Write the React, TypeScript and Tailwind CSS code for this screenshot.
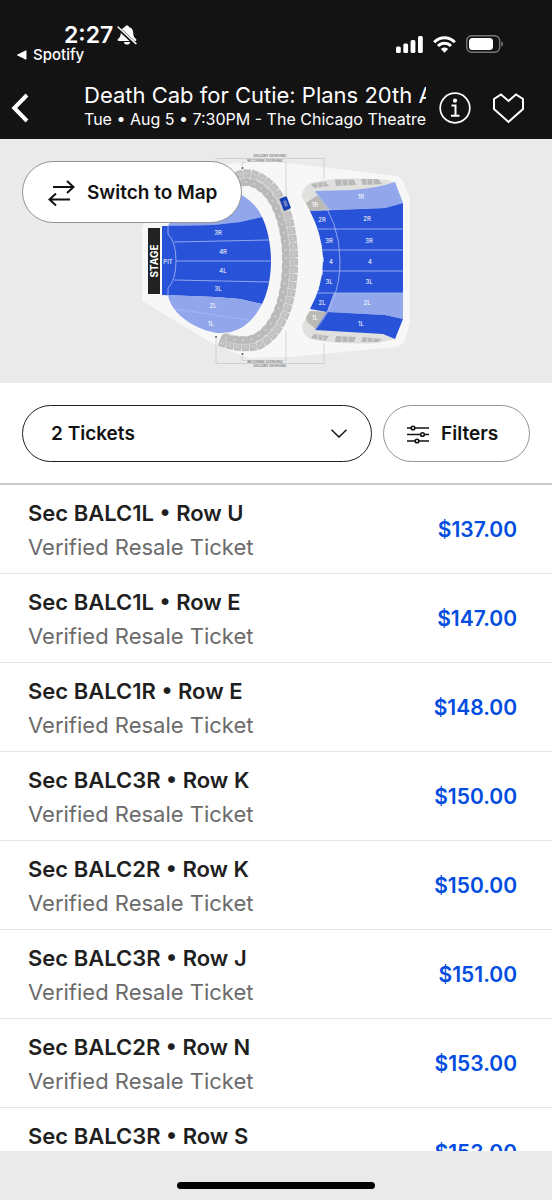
import { useState } from "react";

type Listing = {
  section: string;
  row: string;
  price: string;
};

const LISTINGS: Listing[] = [
  { section: "BALC1L", row: "U", price: "$137.00" },
  { section: "BALC1L", row: "E", price: "$147.00" },
  { section: "BALC1R", row: "E", price: "$148.00" },
  { section: "BALC3R", row: "K", price: "$150.00" },
  { section: "BALC2R", row: "K", price: "$150.00" },
  { section: "BALC3R", row: "J", price: "$151.00" },
  { section: "BALC2R", row: "N", price: "$153.00" },
  { section: "BALC3R", row: "S", price: "$153.00" },
];

const MAP_LABELS = [
  { x: 218, y: 235, text: "3R" },
  { x: 223, y: 254, text: "4R" },
  { x: 223, y: 273, text: "4L" },
  { x: 218, y: 291, text: "3L" },
  { x: 213, y: 308, text: "2L" },
  { x: 211, y: 326, text: "1L" },
  { x: 168, y: 264, text: "PIT" },
  { x: 361, y: 199, text: "1R" },
  { x: 367, y: 221, text: "2R" },
  { x: 369, y: 243, text: "3R" },
  { x: 370, y: 264, text: "4" },
  { x: 369, y: 284, text: "3L" },
  { x: 367, y: 305, text: "2L" },
  { x: 361, y: 326, text: "1L" },
  { x: 315, y: 207, text: "1R" },
  { x: 322, y: 222, text: "2R" },
  { x: 329, y: 243, text: "3R" },
  { x: 331, y: 264, text: "4" },
  { x: 329, y: 284, text: "3L" },
  { x: 322, y: 305, text: "2L" },
  { x: 315, y: 320, text: "1L" },
];

function StatusBar() {
  return (
    <div className="flex h-[68px] items-start justify-between pl-4 pr-12 pt-[23px]">
      <div>
        <div className="flex items-center gap-1 pl-12">
          <span className="text-[23px] font-semibold leading-6">2:27</span>
          <svg className="h-5 w-5" viewBox="0 0 20 20" aria-label="Silent mode">
            <path
              d="M10 .5C8.800 .5 8.200 1.100 8 1.900C5 2.800 3.800 5.200 3.800 8C3.800 11.200 2.600 12.500 1 14C.3 14.700 .6 16 1.800 16H18.200C19.400 16 19.700 14.700 19 14C17.400 12.500 16.200 11.200 16.200 8C16.200 5.200 15 2.800 12 1.900C11.800 1.100 11.200 .5 10 .5ZM6.800 17C7.200 18.700 8.400 19.600 10 19.600C11.600 19.600 12.800 18.700 13.200 17Z"
              fill="#fff"
            />
            <path d="M.5 2.500L19 19.500" stroke="#131313" strokeWidth="3.600" />
            <path d="M1 2L19 18.600" stroke="#fff" strokeWidth="1.500" strokeLinecap="round" />
          </svg>
        </div>
        <a href="#spotify" className="flex items-center gap-[6px] text-[15px] font-medium leading-4">
          <svg className="h-[10px] w-[11px]" viewBox="0 0 11 10" aria-hidden="true">
            <path d="M1.500 5L10 .8V9.200Z" fill="#fff" stroke="#fff" strokeLinejoin="round" />
          </svg>
          Spotify
        </a>
      </div>
      <div className="flex items-center gap-[10px] pt-3">
        <svg className="h-[17px] w-[27px]" viewBox="0 0 27 17" fill="#fff" aria-label="Signal">
          <rect x="0" y="10.500" width="4.800" height="6.500" rx="1.500" />
          <rect x="7.300" y="7.500" width="4.800" height="9.500" rx="1.500" />
          <rect x="14.600" y="4" width="4.800" height="13" rx="1.500" />
          <rect x="22" y="0" width="4.800" height="17" rx="1.500" />
        </svg>
        <svg className="h-[17px] w-[23px]" viewBox="0 0 23 17" fill="none" stroke="#fff" strokeWidth="3" aria-label="Wi-Fi">
          <path d="M1.200 6.200C7 .1 16 .1 21.800 6.200" />
          <path d="M5 10C8.800 6.200 14.200 6.200 18 10" />
          <path d="M7.900 12.900C10 10.900 13 10.900 15.100 12.900L11.500 16.700Z" fill="#fff" stroke="none" />
        </svg>
        <svg className="h-[18px] w-[38px]" viewBox="0 0 38 18" aria-label="Battery">
          <rect x=".7" y=".7" width="33" height="16.600" rx="5" fill="none" stroke="#77777a" strokeWidth="1.400" />
          <rect x="3" y="3" width="24" height="12" rx="3.500" fill="#fff" />
          <path d="M35.300 6.300C37.600 7.300 37.600 10.700 35.300 11.700Z" fill="#77777a" />
        </svg>
      </div>
    </div>
  );
}

function EventHeader() {
  return (
    <div className="flex h-[71px] items-start pl-[11px] pr-7">
      <button type="button" aria-label="Back" className="mt-[25px] w-[73px] shrink-0">
        <svg className="h-[30px] w-[18px]" viewBox="0 0 18 30" fill="none" stroke="#fff" strokeWidth="4">
          <path d="M16 2L3.300 15L16 28" />
        </svg>
      </button>
      <div className="min-w-0 flex-1 overflow-hidden whitespace-nowrap pt-[13px]">
        <h1 className="text-[22px] font-normal leading-7">Death Cab for Cutie: Plans 20th Anniversary Tour</h1>
        <p className="text-[16px] leading-5">Tue • Aug 5 • 7:30PM - The Chicago Theatre</p>
      </div>
      <button type="button" aria-label="Event info" className="ml-[13px] mt-6 shrink-0">
        <svg className="h-8 w-8" viewBox="0 0 32 32" fill="none" stroke="#fff">
          <circle cx="16" cy="16" r="14.800" strokeWidth="1.700" />
          <circle cx="16" cy="8.700" r="2.100" fill="#fff" stroke="none" />
          <path d="M12.500 13.500H16.500V23.500M12 23.700H20.500" strokeWidth="2" />
        </svg>
      </button>
      <button type="button" aria-label="Favorite" className="ml-[21px] mt-6 shrink-0">
        <svg className="h-8 w-8" viewBox="0 0 32 32" fill="none" stroke="#fff" strokeWidth="2">
          <path d="M9 2.500L16.500 9L24 2.500L31 7V17L16.500 30L2 17V7Z" />
        </svg>
      </button>
    </div>
  );
}

function SeatMap() {
  return (
    <svg className="block w-full" viewBox="0 139 552 244" role="img" aria-label="Seating chart">
      <path d="M142 226L216 166L252 160L287 163L397 176Q402 177 404 184L410 198V322L405 340Q402 346 396 347L290 357L248 358L215 345L142 301Z" fill="#f7f7f7" />
      <rect x="148" y="228" width="12" height="66" fill="#222" />

      {/* orchestra */}
      <path d="M168 226C185 197 207 187 218 188C238 189 255 201 262 217L240 222L213 225Z" fill="#91a6eb" />
      <path d="M162 226L213 225L240 222L262 217C274 242 274 280 262 304L240 299L215 297L162 295Z" fill="#2853d9" />
      <path d="M168 295L215 297L240 299L262 304C250 328 233 334 218 333C198 331 171 315 168 295Z" fill="#91a6eb" />
      <g fill="none" stroke="#a9bbf3" strokeWidth=".8">
        <path d="M168 226V234Q176 242 176 261T168 288V296" />
        <path d="M174 242L269 240M176 261H271M174 280L269 282M175 309L248 320" />
      </g>

      {/* mezzanine ring */}
      <g fill="none">
        <path d="M222 338Q240 345 255 342C278 333 289 300 289 261C289 222 278 189 255 180Q245 176 234 182" stroke="#dadada" strokeWidth="13" />
        <path d="M219 342Q241 350 258 346C283 335 294 300 294 261C294 222 283 187 258 176Q245 170 234 177" stroke="#bfbfbf" strokeWidth="8" strokeDasharray="7 .8" />
        <path d="M225 338Q239 342 252 339C274 331 286 300 286 261C286 222 274 191 252 183Q244 180 234 186" stroke="#b9b9b9" strokeWidth="8" strokeDasharray="2.500 6" strokeLinecap="round" />
        <path d="M222 340Q240 347 256 343C280 334 290 300 290 261C290 222 280 188 256 179" stroke="#d6d6d6" strokeWidth=".8" />
        <path d="M219 342Q241 350 258 346C283 335 294 300 294 261C294 222 283 187 258 176Q245 170 234 177" stroke="#d2d2d2" strokeWidth="2.500" strokeDasharray="1 1 1 4.800" strokeDashoffset="-2" />
        <path d="M225 338Q239 342 252 339C274 331 286 300 286 261C286 222 274 191 252 183Q244 180 234 186" stroke="#d0d0d0" strokeWidth="2" strokeDasharray="2 6.500" />
      </g>
      <path d="M279.500 199L286.500 196L291 208L284 211Z" fill="#173fb5" />
      <path d="M283 201L286 200L288 206L285 207Z" fill="#6b80c9" />

      {/* balcony */}
      <path d="M302 197Q302 188 310 183Q340 176 388 180L396 183L390 192L340 215L310 211ZM302 325Q302 334 310 339Q340 345 378 343L396 339L390 325L340 308L310 311Z" fill="#e0e0de" />
      <path d="M306 203L318 195L330 209L310 211ZM306 317L310 311L328 312L316 329L307 322Z" fill="#bbb9b5" />
      <path d="M311 184L325 181.500L329 186L314 188ZM335 179.500H354L356 185L336 186ZM361 179H378L382 184L363 185ZM311 338L325 341L329 336L314 334ZM335 342H354L356 337L336 336ZM361 342H378L382 339L363 337Z" fill="#b7b7b7" />
      <path d="M318 181V188M323 181V188M342 179V187M348 179V187M367 179V187M373 179V187M318 333V341M323 333V341M342 335V343M348 335V343M367 335V343M373 335V343" stroke="#e0e0de" />
      <path d="M315 191L352 190Q378 188 395 182L403 203L385 208L330 210Z" fill="#91a6eb" />
      <path d="M310 211L385 208L403 203V293H334L327 312L310 309Q323 285 323 261T310 211Z" fill="#2853d9" />
      <path d="M334 293H403V319L385 315L327 312Z" fill="#91a6eb" />
      <path d="M327 312L385 315L403 319L395 339L383 334L315 330Z" fill="#2853d9" />
      <g fill="none" stroke="#a9bbf3" strokeWidth=".8">
        <path d="M315 191Q340 221 340 261T315 330" />
        <path d="M317 229H403M322 250H403M322 271H403M317 293H403" />
      </g>
      <path d="M316 226V231M321 245V250M323 257V262M322 270V275M318 286V291" stroke="#f7f7f7" strokeWidth="1" />

      {/* overhang outlines */}
      <g fill="none" stroke="#c4c4c4" strokeWidth=".7">
        <path d="M216 178V158.500H324V179M242 166V162.500H246M284 162.500H286V197" />
        <path d="M216 339V363.500H324V343M242 356V360.500H246M284 360.500H286V331" />
      </g>
      <g fill="#555">
        <circle cx="216" cy="337" r="1" />
        <circle cx="242.500" cy="354" r="1" />
        <circle cx="242.500" cy="168" r="1" />
      </g>
      <g fill="#777" fontSize="3" fontWeight="600" textAnchor="middle">
        <text x="270" y="157">BALCONY OVERHANG</text>
        <text x="265" y="162">MEZZANINE OVERHANG</text>
        <text x="265" y="363">MEZZANINE OVERHANG</text>
        <text x="270" y="367">BALCONY OVERHANG</text>
      </g>

      <g fill="#fff" fontSize="6" textAnchor="middle">
        {MAP_LABELS.map((label) => (
          <text key={`${label.x}-${label.y}`} x={label.x} y={label.y}>{label.text}</text>
        ))}
      </g>
      <text transform="translate(157.500 261) rotate(-90)" fill="#fff" fontSize="10" fontWeight="700" textAnchor="middle">STAGE</text>
    </svg>
  );
}

function TicketRow({ section, row, price }: Listing) {
  return (
    <li className="h-[89px] border-b border-[#e6e6e6]">
      <a href={`#${section}-${row}`} className="flex h-full items-center justify-between pl-7 pr-[35px] pt-[2px]">
        <span>
          <span className="block text-[22px] font-semibold leading-[34px] text-[#1f1f1f]">Sec {section} • Row {row}</span>
          <span className="block text-[22px] leading-[34px] text-[#6b6b6b]">Verified Resale Ticket</span>
        </span>
        <span className="text-[21px] font-semibold text-[#024ddf]">{price}</span>
      </a>
    </li>
  );
}

export default function App() {
  const [quantity, setQuantity] = useState("2");

  return (
    <div className="flex h-screen flex-col overflow-hidden bg-white font-['Inter',sans-serif] text-[#121212]">
      <header className="shrink-0 bg-[#131313] text-white">
        <StatusBar />
        <EventHeader />
      </header>

      <section className="relative shrink-0 bg-[#eaeaea]">
        <SeatMap />
        <button type="button" className="absolute left-[22px] top-[22px] flex h-[62px] w-[220px] items-center gap-3 rounded-full border border-[#949494] bg-white pl-[25px] pt-[2px] text-[19px] font-semibold">
          <svg className="h-[26px] w-[27px] shrink-0" viewBox="0 0 27 26" fill="none" stroke="#121212" strokeWidth="2" aria-hidden="true">
            <path d="M5 7H26M19 1L25.500 7L19 13M22 19.500H1M8 13.500L1.500 19.500L8 25.500" />
          </svg>
          Switch to Map
        </button>
      </section>

      <div className="flex shrink-0 gap-[11px] border-b-2 border-[#cacaca] px-[22px] pb-[21px] pt-[22px]">
        <div className="relative flex-1">
          <select
            aria-label="Ticket quantity"
            value={quantity}
            onChange={(event) => setQuantity(event.target.value)}
            className="h-[57px] w-full appearance-none rounded-full border border-[#1f1f1f] bg-white pl-7 pt-[2px] text-[19px] font-semibold"
          >
            <option value="1">1 Ticket</option>
            <option value="2">2 Tickets</option>
            <option value="3">3 Tickets</option>
            <option value="4">4 Tickets</option>
          </select>
          <svg className="pointer-events-none absolute right-[25px] top-6 h-[9px] w-4" viewBox="0 0 16 9" fill="none" stroke="#121212" strokeWidth="1.500" aria-hidden="true">
            <path d="M.5 .7L8 8L15.500 .7" />
          </svg>
        </div>
        <button type="button" className="flex h-[57px] w-[147px] items-center gap-3 rounded-full border border-[#949494] bg-white pl-[23px] pt-[2px] text-[19px] font-semibold">
          <svg className="h-5 w-[22px]" viewBox="0 0 22 20" fill="none" stroke="#121212" strokeWidth="1.600" aria-hidden="true">
            <path d="M0 3H22M0 9.500H22M0 16H22" />
            <g fill="#fff">
              <circle cx="6" cy="3" r="1.800" />
              <circle cx="15.500" cy="9.500" r="1.800" />
              <circle cx="10" cy="16" r="1.800" />
            </g>
          </svg>
          Filters
        </button>
      </div>

      <main className="min-h-0 flex-1 overflow-hidden">
        <ul>
          {LISTINGS.map((listing) => (
            <TicketRow key={`${listing.section}-${listing.row}`} {...listing} />
          ))}
        </ul>
      </main>

      <footer className="flex h-[49px] shrink-0 justify-center bg-[#eaeaea] pt-[31px]">
        <div className="h-[7px] w-[198px] rounded-full bg-black" />
      </footer>
    </div>
  );
}
